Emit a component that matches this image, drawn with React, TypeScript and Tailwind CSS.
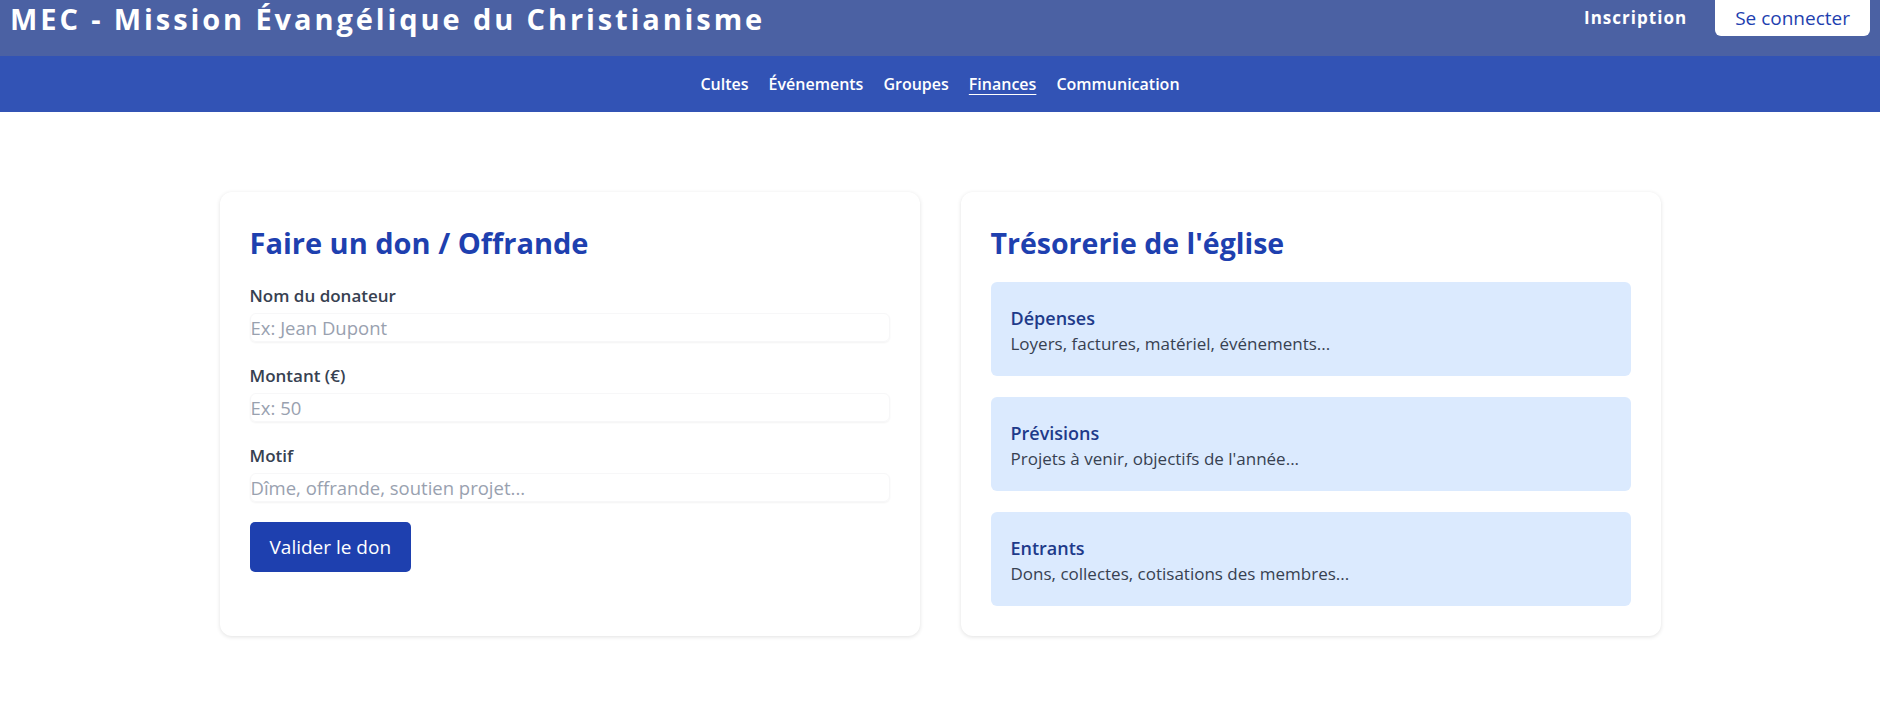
const navItems = ['Cultes', 'Événements', 'Groupes', 'Finances', 'Communication']

const fields = [
  { label: 'Nom du donateur', placeholder: 'Ex: Jean Dupont', type: 'text' },
  { label: 'Montant (€)', placeholder: 'Ex: 50', type: 'number' },
  { label: 'Motif', placeholder: 'Dîme, offrande, soutien projet...', type: 'text' },
]

const treasury = [
  { title: 'Dépenses', text: 'Loyers, factures, matériel, événements...' },
  { title: 'Prévisions', text: "Projets à venir, objectifs de l'année..." },
  { title: 'Entrants', text: 'Dons, collectes, cotisations des membres...' },
]

export default function App() {
  return (
    <div className="min-h-screen bg-white font-['Open_Sans',sans-serif]">
      <header className="h-[56px] bg-[#4b61a3] flex justify-between items-start pl-[10px] pr-[10px]">
        <h1 className="text-white text-[29px] font-bold tracking-widest leading-none mt-[4px]">
          MEC - Mission Évangélique du Christianisme
        </h1>
        <div className="flex items-start gap-[28px]">
          <a className="text-white font-bold text-[17px] tracking-[0.06em] leading-none mt-[9px]">Inscription</a>
          <button className="h-[36px] px-[20px] bg-white text-[#1e40af] text-[19px] rounded-b-md leading-none">
            Se connecter
          </button>
        </div>
      </header>

      <nav className="h-[56px] bg-[#3253b5] flex justify-center items-center gap-[20px]">
        {navItems.map((item) => (
          <a
            key={item}
            className={
              item === 'Finances'
                ? 'text-white font-semibold text-[16px] underline underline-offset-4'
                : 'text-white font-semibold text-[16px]'
            }
          >
            {item}
          </a>
        ))}
      </nav>

      <main className="pt-[80px] flex justify-center gap-[41px] items-stretch">
        <section className="w-[700px] bg-white rounded-xl shadow-[0_1px_4px_rgba(0,0,0,0.12)] p-[30px]">
          <h2 className="text-[#1e40af] text-[29px] font-bold leading-[36px] mt-[3px] mb-[21px]">Faire un don / Offrande</h2>
          {fields.map((f) => (
            <div key={f.label} className="mb-5">
              <label className="block text-[#374151] font-semibold text-[17px] leading-[27px]">{f.label}</label>
              <input
                type={f.type}
                placeholder={f.placeholder}
                className="mt-1 w-full h-[29px] rounded-md border border-[#f7f7f8] shadow-[0_1px_2px_rgba(0,0,0,0.05)] text-[18.5px] placeholder:text-gray-400 outline-none"
              />
            </div>
          ))}
          <button className="h-[50px] px-[20px] bg-[#1e40af] text-white text-[19px] rounded-[5px]">
            Valider le don
          </button>
        </section>

        <section className="w-[700px] bg-white rounded-xl shadow-[0_1px_4px_rgba(0,0,0,0.12)] p-[30px]">
          <h2 className="text-[#1e40af] text-[28.5px] font-bold leading-[36px] mt-[3px] mb-[21px]">Trésorerie de l'église</h2>
          <div className="flex flex-col gap-[21px]">
            {treasury.map((t) => (
              <div key={t.title} className="bg-[#dbeafe] rounded-md px-5 pt-[23px] pb-[19px]">
                <h3 className="text-[#1e3a8a] font-semibold text-[18px] leading-[26px]">{t.title}</h3>
                <p className="text-[#374151] text-[17px] leading-[26px]">{t.text}</p>
              </div>
            ))}
          </div>
        </section>
      </main>
    </div>
  )
}
